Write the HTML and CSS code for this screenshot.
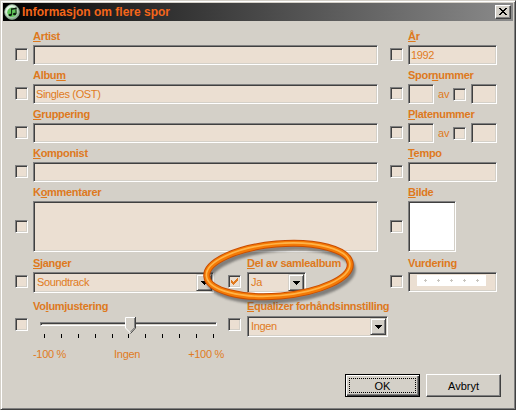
FILE: index.html
```html
<!DOCTYPE html>
<html lang="no">
<head>
<meta charset="utf-8">
<title>Informasjon om flere spor</title>
<link rel="stylesheet" href="styles.css">
</head>
<body>
<div class="window">
  <div class="titlebar">
    <svg class="appicon" width="16" height="16" viewBox="0 0 16 16">
      <defs>
        <radialGradient id="disc" cx="0.4" cy="0.35" r="0.7">
          <stop offset="0" stop-color="#ffffff"/>
          <stop offset="0.55" stop-color="#cfe9cf"/>
          <stop offset="1" stop-color="#6f9a78"/>
        </radialGradient>
      </defs>
      <circle cx="8" cy="8" r="7.4" fill="url(#disc)" stroke="#8aa48e" stroke-width="0.8"/>
      <circle cx="8" cy="8.3" r="4.8" fill="#62c85a"/>
      <ellipse cx="6.2" cy="11" rx="1.6" ry="1.2" fill="#0e1e10"/>
      <ellipse cx="10.6" cy="10" rx="1.6" ry="1.2" fill="#0e1e10"/>
      <rect x="7.1" y="4.6" width="1" height="6.4" fill="#0e1e10"/>
      <rect x="11.5" y="3.6" width="1" height="6.4" fill="#0e1e10"/>
      <polygon points="7.1,4.6 12.5,3.6 12.5,5 7.1,6" fill="#0e1e10"/>
    </svg>
    <span class="title">Informasjon om flere spor</span>
    <span class="closebtn">
      <svg width="8" height="7" viewBox="0 0 8 7" shape-rendering="crispEdges">
        <rect x="0" y="0" width="2" height="1"/><rect x="6" y="0" width="2" height="1"/>
        <rect x="1" y="1" width="2" height="1"/><rect x="5" y="1" width="2" height="1"/>
        <rect x="2" y="2" width="4" height="1"/>
        <rect x="3" y="3" width="2" height="1"/>
        <rect x="2" y="4" width="4" height="1"/>
        <rect x="1" y="5" width="2" height="1"/><rect x="5" y="5" width="2" height="1"/>
        <rect x="0" y="6" width="2" height="1"/><rect x="6" y="6" width="2" height="1"/>
      </svg>
    </span>
  </div>

  <div class="content">
    <div class="row">
      <div class="cell main">
        <span class="lbl"><u>A</u>rtist</span>
        <span class="cb"></span>
        <div class="ctl sunk field"></div>
      </div>
      <div class="cell side">
        <span class="lbl"><u>Å</u>r</span>
        <span class="cb"></span>
        <div class="ctl sunk field">1992</div>
      </div>
    </div>

    <div class="row">
      <div class="cell main">
        <span class="lbl">Albu<u>m</u></span>
        <span class="cb"></span>
        <div class="ctl sunk field">Singles (OST)</div>
      </div>
      <div class="cell side">
        <span class="lbl">Spor<u>n</u>ummer</span>
        <span class="cb"></span>
        <div class="ctl pair">
          <div class="sunk small"></div>
          <span class="av">av</span>
          <span class="cb"></span>
          <div class="sunk small last"></div>
        </div>
      </div>
    </div>

    <div class="row">
      <div class="cell main">
        <span class="lbl"><u>G</u>ruppering</span>
        <span class="cb"></span>
        <div class="ctl sunk field"></div>
      </div>
      <div class="cell side">
        <span class="lbl"><u>P</u>latenummer</span>
        <span class="cb"></span>
        <div class="ctl pair">
          <div class="sunk small"></div>
          <span class="av">av</span>
          <span class="cb"></span>
          <div class="sunk small last"></div>
        </div>
      </div>
    </div>

    <div class="row">
      <div class="cell main">
        <span class="lbl"><u>K</u>omponist</span>
        <span class="cb"></span>
        <div class="ctl sunk field"></div>
      </div>
      <div class="cell side">
        <span class="lbl"><u>T</u>empo</span>
        <span class="cb"></span>
        <div class="ctl sunk field"></div>
      </div>
    </div>

    <div class="row row-tall">
      <div class="cell main">
        <span class="lbl">K<u>o</u>mmentarer</span>
        <span class="cb mid"></span>
        <div class="ctl sunk area"></div>
      </div>
      <div class="cell side">
        <span class="lbl"><u>B</u>ilde</span>
        <span class="cb mid"></span>
        <div class="ctl sunk artwork"></div>
      </div>
    </div>

    <div class="row row-genre">
      <div class="cell genre">
        <span class="lbl"><u>S</u>janger</span>
        <span class="cb"></span>
        <div class="ctl sunk combo">
          <span class="val">Soundtrack</span>
          <span class="dd"><svg width="7" height="4" viewBox="0 0 7 4" shape-rendering="crispEdges"><rect x="0" y="0" width="7" height="1"/><rect x="1" y="1" width="5" height="1"/><rect x="2" y="2" width="3" height="1"/><rect x="3" y="3" width="1" height="1"/></svg></span>
        </div>
      </div>
      <div class="cell midcol compil">
        <span class="lbl"><u>D</u>el av samlealbum</span>
        <span class="cb">
          <svg class="check" width="7" height="7" viewBox="0 0 7 7" shape-rendering="crispEdges">
            <rect x="6" y="0" width="1" height="1"/>
            <rect x="5" y="1" width="2" height="1"/>
            <rect x="0" y="2" width="1" height="1"/><rect x="4" y="2" width="3" height="1"/>
            <rect x="0" y="3" width="2" height="1"/><rect x="3" y="3" width="3" height="1"/>
            <rect x="0" y="4" width="5" height="1"/>
            <rect x="1" y="5" width="3" height="1"/>
            <rect x="2" y="6" width="1" height="1"/>
          </svg>
        </span>
        <div class="ctl sunk combo">
          <span class="val">Ja</span>
          <span class="dd"><svg width="7" height="4" viewBox="0 0 7 4" shape-rendering="crispEdges"><rect x="0" y="0" width="7" height="1"/><rect x="1" y="1" width="5" height="1"/><rect x="2" y="2" width="3" height="1"/><rect x="3" y="3" width="1" height="1"/></svg></span>
        </div>
      </div>
      <div class="cell side">
        <span class="lbl">Vurdering</span>
        <span class="cb"></span>
        <div class="ctl sunk field rating">
          <svg class="stars" width="69" height="11" viewBox="0 0 69 11" shape-rendering="crispEdges">
            <rect width="69" height="11" fill="#fff"/>
            <g fill="#c9c6c0">
              <rect x="7" y="5" width="3" height="1"/><rect x="8" y="4" width="1" height="3"/>
              <rect x="20" y="5" width="3" height="1"/><rect x="21" y="4" width="1" height="3"/>
              <rect x="33" y="5" width="3" height="1"/><rect x="34" y="4" width="1" height="3"/>
              <rect x="46" y="5" width="3" height="1"/><rect x="47" y="4" width="1" height="3"/>
              <rect x="59" y="5" width="3" height="1"/><rect x="60" y="4" width="1" height="3"/>
            </g>
          </svg>
        </div>
      </div>
    </div>

    <div class="row row-vol">
      <div class="cell volume">
        <span class="lbl">Vo<u>l</u>umjustering</span>
        <span class="cb"></span>
        <div class="ctl slider">
          <div class="track"></div>
          <svg class="thumb" width="11" height="17" viewBox="0 0 11 17">
            <polygon points="0,0 11,0 11,11 5.5,16.5 0,11" fill="#d4d0c8"/>
            <polyline points="0.5,11 0.5,0.5 10,0.5" fill="none" stroke="#fff" stroke-width="1"/>
            <polyline points="0.5,11 5.5,16" fill="none" stroke="#fff" stroke-width="1"/>
            <polyline points="10.5,0 10.5,11 5.5,16.5" fill="none" stroke="#404040" stroke-width="1"/>
            <polyline points="9.5,1 9.5,10.6 5.5,14.8" fill="none" stroke="#808080" stroke-width="1"/>
          </svg>
          <div class="ticks">
            <i></i><i></i><i></i><i></i><i></i><i></i><i></i><i></i><i></i><i></i><i></i>
          </div>
          <div class="scale">
            <span>-100 %</span><span>Ingen</span><span>+100 %</span>
          </div>
        </div>
      </div>
      <div class="cell midcol eq">
        <span class="lbl"><u>E</u>qualizer forhåndsinnstilling</span>
        <span class="cb"></span>
        <div class="ctl sunk combo">
          <span class="val">Ingen</span>
          <span class="dd"><svg width="7" height="4" viewBox="0 0 7 4" shape-rendering="crispEdges"><rect x="0" y="0" width="7" height="1"/><rect x="1" y="1" width="5" height="1"/><rect x="2" y="2" width="3" height="1"/><rect x="3" y="3" width="1" height="1"/></svg></span>
        </div>
      </div>
    </div>

    <div class="buttons">
      <span class="btn default">OK</span>
      <span class="btn">Avbryt</span>
    </div>
  </div>

  <svg class="ring" width="180" height="80" viewBox="0 0 180 80">
    <defs>
      <filter id="soft" x="-10%" y="-30%" width="120%" height="160%">
        <feGaussianBlur stdDeviation="1.2"/>
      </filter>
    </defs>
    <g transform="rotate(-5 88.5 38)">
      <ellipse cx="90.5" cy="42.5" rx="72" ry="26" fill="none" stroke="#3c3c3c" stroke-opacity="0.55" stroke-width="6" filter="url(#soft)"/>
      <ellipse cx="88.5" cy="38" rx="72" ry="26" fill="none" stroke="#c84c00" stroke-width="7"/>
      <ellipse cx="88.5" cy="38" rx="72" ry="26" fill="none" stroke="#f47a06" stroke-width="5"/>
      <ellipse cx="88.2" cy="37.6" rx="72" ry="26" fill="none" stroke="#ffb449" stroke-width="1.6"/>
    </g>
  </svg>
</div>
</body>
</html>
```

FILE: styles.css
```css
* { box-sizing: border-box; }

html, body {
  margin: 0;
  padding: 0;
}

body {
  width: 516px;
  height: 410px;
  overflow: hidden;
  background: #d4d0c8;
  font-family: "Liberation Sans", Arial, sans-serif;
  font-size: 11px;
  color: #df7a1f;
}

.window {
  position: relative;
  width: 516px;
  height: 410px;
  background: #d4d0c8;
  border: 1px solid;
  border-color: #d4d0c8 #404040 #404040 #d4d0c8;
  box-shadow: inset 1px 1px #ffffff, inset -1px -1px #808080;
  padding: 2px;
}

/* ---------- title bar ---------- */
.titlebar {
  display: flex;
  align-items: center;
  height: 18px;
  padding-left: 1px;
  background: linear-gradient(to right, #000000 0%, #1a1a1a 15%, #8a8a8a 100%);
}

.appicon { display: block; flex: none; }

.title {
  margin-left: 2px;
  font-size: 12px;
  font-weight: bold;
  color: #f4661a;
  line-height: 18px;
  white-space: nowrap;
}

.closebtn {
  margin-left: auto;
  margin-right: 2px;
  width: 16px;
  height: 14px;
  display: flex;
  align-items: center;
  justify-content: center;
  padding: 0 1px 1px 0;
  background: #d4d0c8;
  border: 1px solid;
  border-color: #ffffff #404040 #404040 #ffffff;
  box-shadow: inset -1px -1px #808080;
}
.closebtn svg { display: block; fill: #000; }

/* ---------- content ---------- */
.content {
  display: flex;
  flex-direction: column;
  height: 386px;
  padding: 9px 16px 10px 12px;
}

.row {
  display: flex;
  align-items: flex-start;
  margin-bottom: 4px;
}
.row-tall { margin-bottom: 5px; }
.row-genre { margin-bottom: 7px; }
.row-vol { margin-bottom: 0; }

.cell {
  display: grid;
  grid-template-columns: 13px auto;
  grid-template-rows: 13px auto;
  column-gap: 5px;
  row-gap: 2px;
}

.lbl {
  grid-column: 2;
  grid-row: 1;
  font-weight: bold;
  line-height: 13px;
  letter-spacing: -0.3px;
  white-space: nowrap;
  color: #de791d;
}
.lbl u { text-decoration-thickness: 1px; text-underline-offset: 1px; }

.cell > .cb {
  grid-column: 1;
  grid-row: 2;
  margin-top: 3px;
}
.cell > .cb.mid { margin-top: 19px; }

.ctl {
  grid-column: 2;
  grid-row: 2;
}

.main { grid-template-columns: 13px 345px; }
.main .ctl { width: 345px; }
.side {
  margin-left: auto;
  grid-template-columns: 13px 89px;
}
.side .ctl { width: 89px; }

/* ---------- classic 3D widgets ---------- */
.sunk {
  background: #ebdfd2;
  border: 1px solid;
  border-color: #808080 #ffffff #ffffff #808080;
  box-shadow: inset 1px 1px #404040, inset -1px -1px #d4d0c8;
}

.cb {
  display: block;
  width: 13px;
  height: 13px;
  background: #ebdfd2;
  border: 1px solid;
  border-color: #808080 #ffffff #ffffff #808080;
  box-shadow: inset 1px 1px #404040, inset -1px -1px #d4d0c8;
}
.cb .check { display: block; margin: 2px; fill: #e07a1e; }

.field {
  height: 20px;
  padding: 1px 2px;
  line-height: 16px;
  letter-spacing: -0.35px;
  white-space: nowrap;
  color: #e07b22;
}

.area { height: 51px; }
.side .artwork { width: 48px; height: 51px; background: #ffffff; }

/* track/disc number pairs */
.pair {
  display: flex;
  align-items: center;
  height: 20px;
}
.small { width: 26px; height: 20px; flex: none; }
.av {
  width: 12px;
  margin: 0 3px 0 4px;
  line-height: 20px;
  color: #e07b22;
}
.pair .last { margin-left: 5px; }

/* combo boxes */
.combo {
  display: flex;
  align-items: stretch;
  height: 21px;
  padding: 1px;
}
.combo .val {
  flex: 1;
  padding-left: 2px;
  line-height: 17px;
  letter-spacing: -0.35px;
  color: #e07b22;
  white-space: nowrap;
  overflow: hidden;
}
.dd {
  flex: none;
  width: 16px;
  height: 17px;
  display: flex;
  align-items: center;
  justify-content: center;
  padding-top: 1px;
  background: #d4d0c8;
  border: 1px solid;
  border-color: #d4d0c8 #404040 #404040 #d4d0c8;
  box-shadow: inset 1px 1px #ffffff, inset -1px -1px #808080;
}
.dd svg { display: block; fill: #000; }

.genre .ctl { width: 181px; }
.midcol { column-gap: 6px; }
.compil { margin-left: 14px; }
.compil .ctl { width: 59px; }

/* rating */
.rating { display: flex; align-items: flex-start; padding: 2px 0 0 8px; }
.stars { display: block; }

/* volume row */
.row-vol .cell { row-gap: 3px; }
.row-vol .cell > .cb { margin-top: 2px; }
.volume .ctl { width: 195px; }
.eq .ctl { width: 141px; }

.slider {
  position: relative;
  height: 47px;
}
.track {
  margin: 6px 0 0 7px;
  width: 177px;
  height: 4px;
  border: 1px solid;
  border-color: #808080 #ffffff #ffffff #808080;
  box-shadow: inset 1px 1px #404040, inset -1px -1px #d4d0c8;
  background: #d4d0c8;
}
.thumb {
  position: absolute;
  left: 92px;
  top: 1px;
  display: block;
}
.ticks {
  display: flex;
  justify-content: space-between;
  width: 170px;
  height: 4px;
  margin: 8px 0 0 11px;
}
.ticks i {
  display: block;
  width: 1px;
  height: 4px;
  background: #000;
}
.scale {
  display: flex;
  justify-content: space-between;
  width: 191px;
  margin-top: 10px;
  line-height: 13px;
  letter-spacing: -0.3px;
  color: #e07b22;
}

/* buttons */
.buttons {
  margin-top: auto;
  margin-right: -4px;
  display: flex;
  justify-content: flex-end;
  gap: 6px;
}
.btn {
  width: 75px;
  height: 23px;
  display: flex;
  align-items: center;
  justify-content: center;
  background: #d4d0c8;
  color: #000;
  font-size: 11px;
  border: 1px solid;
  border-color: #ffffff #404040 #404040 #ffffff;
  box-shadow: inset -1px -1px #808080;
}
.btn.default {
  border-color: #000;
  box-shadow: inset 1px 1px #ffffff, inset -1px -1px #404040, inset -2px -2px #808080;
  outline: 1px dotted #000;
  outline-offset: -5px;
}

/* annotation ring overlay */
.ring {
  position: absolute;
  left: 189px;
  top: 231px;
  pointer-events: none;
}
```
